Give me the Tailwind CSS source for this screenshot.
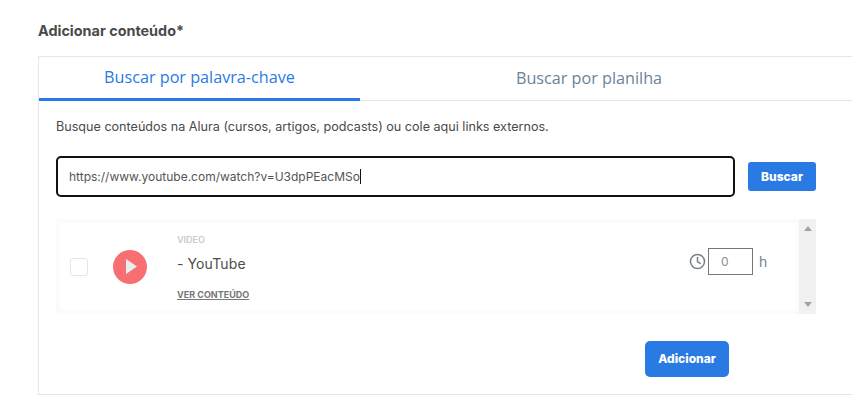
<!DOCTYPE html>
<html>
<head>
<title>Adicionar conteudo</title>
<script src="https://cdn.jsdelivr.net/npm/@tailwindcss/browser@4"></script>
</head>
<body class="bg-white overflow-hidden font-['Inter',sans-serif]">
  <div class="w-[852px] h-[411px] pl-[38px] pt-[22px] overflow-hidden">
    <h2 class="text-[14.4px] leading-[18px] font-bold text-[#4a4a4a]">Adicionar conteúdo*</h2>

    <div class="mt-[16px] w-[830px] h-[339px] border border-[#e4e6e8] border-r-0">
      <!-- Tabs -->
      <div class="flex h-[44px] border-b border-[#e4e6e8] font-['Open_Sans',sans-serif] text-[16.2px]">
        <div class="w-[321px] h-[44px] border-b-[3px] border-[#2a7ae4] text-[#2a7ae4] flex items-center justify-center">Buscar por palavra-chave</div>
        <div class="w-[458px] flex items-center justify-center text-[#6b8299]">Buscar por planilha</div>
      </div>

      <div class="pl-[17px] w-[778px]">
        <p class="mt-[18px] text-[12.6px] leading-[16px] text-[#4a4a4a]">Busque conteúdos na Alura (cursos, artigos, podcasts) ou cole aqui links externos.</p>

        <div class="mt-[21px] flex items-center">
          <div class="w-[679px] h-[41px] border-2 border-[#111] rounded-[5px] flex items-center pl-[11px] text-[12px] text-[#555]">
            <span>https://www.youtube.com/watch?v=U3dpPEacMSo</span><span class="w-px h-[15px] bg-[#111]"></span>
          </div>
          <button class="ml-[13px] w-[68px] h-[29px] bg-[#2a7ae4] rounded-[3px] text-white text-[12px] font-extrabold">Buscar</button>
        </div>

        <!-- Results list -->
        <div class="mt-[22px] h-[95px] flex">
          <div class="w-[743px] h-full bg-[#fafbfc] p-[4px] pr-[3px] pb-[4px]">
            <div class="h-full bg-white flex items-center relative">
              <div class="ml-[10px] w-[18px] h-[18px] border border-[#e2e6ea] rounded-[3px] bg-white"></div>
              <div class="ml-[25px] w-[34px] h-[34px] rounded-full bg-[#f76f72] flex items-center justify-center">
                <svg width="11" height="15" viewBox="0 0 11 15" class="ml-[2px]"><path d="M0 0 L11 7.5 L0 15 Z" fill="#e9eeee"/></svg>
              </div>
              <div class="ml-[30px] flex flex-col h-full">
                <span class="mt-[12px] text-[9px] leading-[10px] font-semibold text-[#c9cccf]">VIDEO</span>
                <span class="mt-[9px] text-[14px] leading-[20px] tracking-[0.1px] text-[#4d4d4d]">- YouTube</span>
                <a class="mt-[15px] text-[9px] leading-[11px] font-bold text-[#777] underline">VER CONTEÚDO</a>
              </div>
              <div class="absolute left-[629px] top-[25px] flex items-center">
                <svg width="17" height="17" viewBox="0 0 16 16" fill="none" stroke="#75808c" stroke-width="1.4"><circle cx="8" cy="8" r="6.6"/><path d="M8 3.8 V8.3 L11 10"/></svg>
                <div class="ml-[2px] w-[45px] h-[27px] border border-[#767676] text-[12px] text-[#8a8f94] flex items-center pl-[12px]">0</div>
                <span class="ml-[6px] text-[14px] text-[#75808c]">h</span>
              </div>
            </div>
          </div>
          <!-- Scrollbar -->
          <div class="w-[17px] h-full bg-[#f1f1f1] flex flex-col items-center justify-between py-[7px]">
            <svg width="8" height="5" viewBox="0 0 8 5"><path d="M4 0 L8 5 H0 Z" fill="#a3a3a3"/></svg>
            <svg width="8" height="5" viewBox="0 0 8 5"><path d="M0 0 H8 L4 5 Z" fill="#a3a3a3"/></svg>
          </div>
        </div>

        <div class="mt-[27px] flex justify-end pr-[87px] w-[760px] relative">
          <button class="w-[84px] h-[36px] bg-[#2a7ae4] rounded-[5px] text-white text-[12px] font-extrabold">Adicionar</button>
        </div>
      </div>
    </div>
  </div>
</body>
</html>
